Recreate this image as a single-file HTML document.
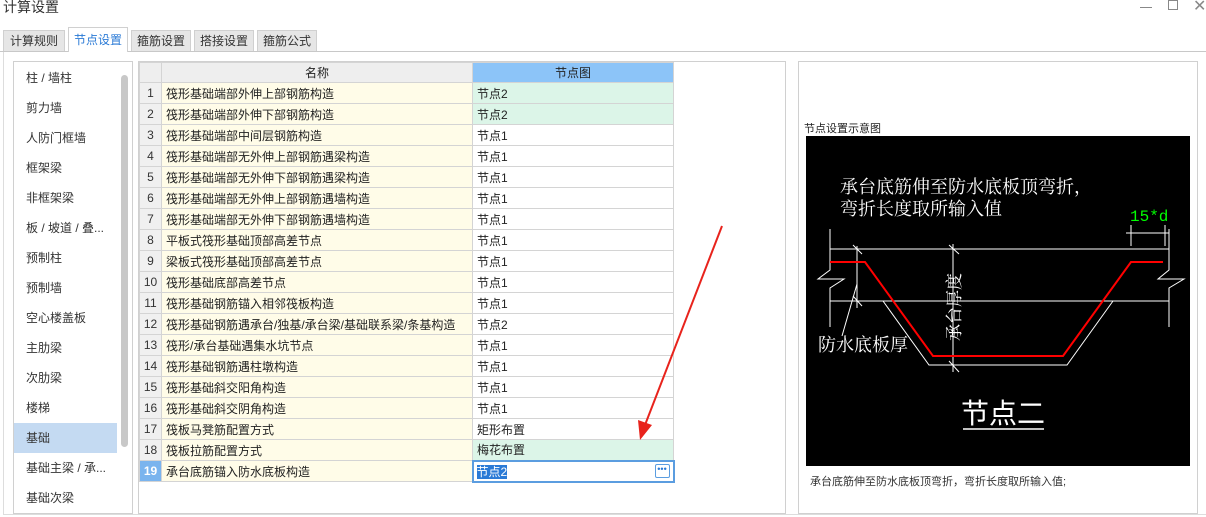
<!DOCTYPE html>
<html><head><meta charset="utf-8"><style>
*{margin:0;padding:0;box-sizing:border-box}
body{width:1206px;height:517px;background:#fff;font-family:"Liberation Sans","Noto Sans CJK SC",sans-serif;font-size:12px;color:#222;position:relative;overflow:hidden}
.abs{position:absolute}
.tab{position:absolute;top:30px;height:21px;background:#e6e6e6;border:1px solid #d0d0d0;border-bottom:none;text-align:center;line-height:20px;font-size:12px;color:#333}
.side div{height:30px;line-height:30px;padding-left:12px;font-size:12px;color:#333}
table{border-collapse:collapse;position:absolute;left:139px;top:62px;table-layout:fixed}
td{border:1px solid #d4d4d4;height:21px;font-size:12px;padding:0 4px;white-space:nowrap;overflow:hidden}
td.n{background:#f0f0f0;text-align:center;padding:0;color:#333}
td.m{background:#fffce8}
td.g{background:#dcf5e8}
th{height:20px;font-weight:normal;border:1px solid #d4d4d4;background:#eee;font-size:12px}
</style></head><body>
<div class="abs" style="left:3px;top:-3px;font-size:14px;color:#333">计算设置</div>
<div class="abs" style="left:1140px;top:7px;width:12px;height:1px;background:#888"></div>
<div class="abs" style="left:1168px;top:0px;width:10px;height:10px;border:1px solid #888"></div>
<div class="abs" style="left:1193px;top:-4px;font-size:16px;color:#888">✕</div>
<div class="abs" style="left:0;top:51px;width:1206px;height:1px;background:#c8c8c8"></div>
<div class="tab" style="left:3px;width:62px">计算规则</div>
<div class="tab" style="left:68px;top:27px;height:25px;width:60px;background:#fff;color:#2a7ad6;line-height:24px">节点设置</div>
<div class="tab" style="left:131px;width:60px">箍筋设置</div>
<div class="tab" style="left:194px;width:60px">搭接设置</div>
<div class="tab" style="left:257px;width:60px">箍筋公式</div>
<div class="abs" style="left:3px;top:52px;width:1203px;height:463px;border-left:1px solid #ddd;border-bottom:1px solid #ddd"></div>
<div class="abs side" style="left:13px;top:61px;width:120px;height:453px;border:1px solid #d0d0d0;padding-top:1px">
<div>柱 / 墙柱</div><div>剪力墙</div><div>人防门框墙</div><div>框架梁</div><div>非框架梁</div><div>板 / 坡道 / 叠...</div><div>预制柱</div><div>预制墙</div><div>空心楼盖板</div><div>主肋梁</div><div>次肋梁</div><div>楼梯</div><div style="background:#c4daf2;margin-right:15px">基础</div><div>基础主梁 / 承...</div><div>基础次梁</div>
</div>
<div class="abs" style="left:121px;top:75px;width:7px;height:372px;background:#c8c8c8;border-radius:4px"></div>
<div class="abs" style="left:138px;top:61px;width:648px;height:453px;border:1px solid #d0d0d0"></div>
<table>
<colgroup><col style="width:22px"><col style="width:311px"><col style="width:201px"></colgroup>
<tr><th></th><th>名称</th><th style="background:#8cc4f8">节点图</th></tr>
<tr><td class="n">1</td><td class="m">筏形基础端部外伸上部钢筋构造</td><td class="g">节点2</td></tr>
<tr><td class="n">2</td><td class="m">筏形基础端部外伸下部钢筋构造</td><td class="g">节点2</td></tr>
<tr><td class="n">3</td><td class="m">筏形基础端部中间层钢筋构造</td><td>节点1</td></tr>
<tr><td class="n">4</td><td class="m">筏形基础端部无外伸上部钢筋遇梁构造</td><td>节点1</td></tr>
<tr><td class="n">5</td><td class="m">筏形基础端部无外伸下部钢筋遇梁构造</td><td>节点1</td></tr>
<tr><td class="n">6</td><td class="m">筏形基础端部无外伸上部钢筋遇墙构造</td><td>节点1</td></tr>
<tr><td class="n">7</td><td class="m">筏形基础端部无外伸下部钢筋遇墙构造</td><td>节点1</td></tr>
<tr><td class="n">8</td><td class="m">平板式筏形基础顶部高差节点</td><td>节点1</td></tr>
<tr><td class="n">9</td><td class="m">梁板式筏形基础顶部高差节点</td><td>节点1</td></tr>
<tr><td class="n">10</td><td class="m">筏形基础底部高差节点</td><td>节点1</td></tr>
<tr><td class="n">11</td><td class="m">筏形基础钢筋锚入相邻筏板构造</td><td>节点1</td></tr>
<tr><td class="n">12</td><td class="m">筏形基础钢筋遇承台/独基/承台梁/基础联系梁/条基构造</td><td>节点2</td></tr>
<tr><td class="n">13</td><td class="m">筏形/承台基础遇集水坑节点</td><td>节点1</td></tr>
<tr><td class="n">14</td><td class="m">筏形基础钢筋遇柱墩构造</td><td>节点1</td></tr>
<tr><td class="n">15</td><td class="m">筏形基础斜交阳角构造</td><td>节点1</td></tr>
<tr><td class="n">16</td><td class="m">筏形基础斜交阴角构造</td><td>节点1</td></tr>
<tr><td class="n">17</td><td class="m">筏板马凳筋配置方式</td><td>矩形布置</td></tr>
<tr><td class="n">18</td><td class="m">筏板拉筋配置方式</td><td class="g">梅花布置</td></tr>
<tr><td class="n" style="background:#7ab4ee;color:#fff;font-weight:bold">19</td><td class="m">承台底筋锚入防水底板构造</td><td style="border:2px solid #5b9de0;padding:0 3px;position:relative"><span style="background:#2a7ad6;color:#fff">节点2</span><span style="position:absolute;right:3px;top:2px;width:15px;height:14px;border:1px solid #5b9de0;border-radius:2px;font-size:9px;line-height:8px;text-align:center;color:#2a7ad6">•••</span></td></tr>
</table>
<svg class="abs" style="left:0;top:0" width="1206" height="517"><line x1="722" y1="226" x2="645" y2="425" stroke="#e8231c" stroke-width="2"/><polygon points="640,440 638,420 652,425" fill="#e8231c"/></svg>
<div class="abs" style="left:798px;top:61px;width:400px;height:453px;border:1px solid #d0d0d0"></div>
<div class="abs" style="left:804px;top:120px;font-size:11px;color:#222">节点设置示意图</div>
<div class="abs" style="left:810px;top:473px;font-size:11px;color:#333">承台底筋伸至防水底板顶弯折，弯折长度取所输入值;</div>
<svg class="abs" style="left:806px;top:136px;background:#000" width="384" height="330" font-family="Liberation Serif,'Noto Serif CJK SC',serif">
<g stroke="#fff" stroke-width="1" fill="none">
<line x1="24" y1="113" x2="363" y2="113"/><line x1="24" y1="165" x2="363" y2="165"/>
<polyline points="24,93 24,134 12,143 38,143 24,152 24,191"/>
<polyline points="363,93 363,134 352,143 378,143 363,152 363,191"/>
<polyline points="77,165 123,229 261,229 307,165"/>
<line x1="325" y1="89" x2="325" y2="110"/><line x1="359" y1="89" x2="359" y2="110"/><line x1="320" y1="97" x2="363" y2="97"/>
<line x1="147" y1="108" x2="147" y2="236"/><line x1="143" y1="109" x2="153" y2="118"/><line x1="143" y1="225" x2="153" y2="236"/>
<line x1="51" y1="110" x2="51" y2="172"/><line x1="47" y1="109" x2="56" y2="118"/><line x1="47" y1="160" x2="56" y2="170"/>
<line x1="51" y1="148" x2="36" y2="200"/>
<line x1="157" y1="293" x2="238" y2="293" stroke-width="1.5"/>
</g>
<polyline points="24,126 59,126 127,220 257,220 325,126 357,126" stroke="#f00" stroke-width="2" fill="none"/>
<text x="34" y="57" fill="#fff" font-size="18">承台底筋伸至防水底板顶弯折，</text>
<text x="34" y="79" fill="#fff" font-size="18">弯折长度取所输入值</text>
<text x="324" y="85" fill="#0f0" font-size="16" font-family="Liberation Mono,monospace">15*d</text>
<text x="12" y="215" fill="#fff" font-size="18">防水底板厚</text>
<text transform="translate(154,171) rotate(-90)" text-anchor="middle" fill="#fff" font-size="17">承台厚度</text>
<text x="197" y="287" text-anchor="middle" fill="#fff" font-size="28" font-family="Liberation Sans,'Noto Sans CJK SC',sans-serif">节点二</text>
</svg>
</body></html>
